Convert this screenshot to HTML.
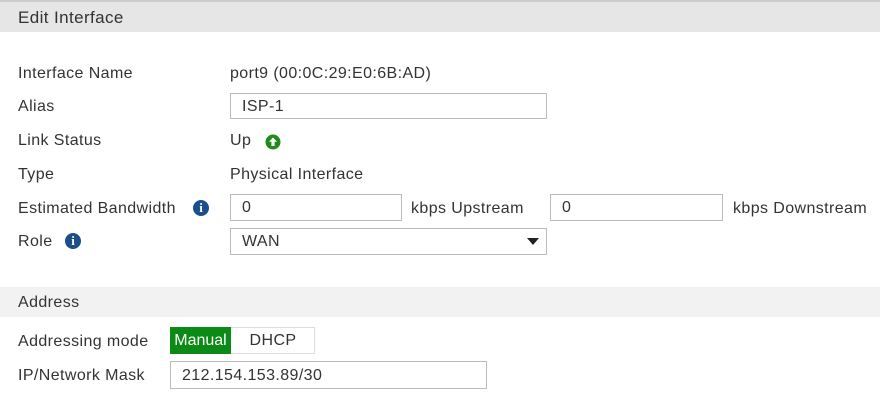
<!DOCTYPE html>
<html><head><style>
body{margin:0;width:880px;height:403px;background:#fff;font-family:"Liberation Sans",sans-serif;font-size:16px;letter-spacing:0.4px;color:#333;position:relative;overflow:hidden}
.a{position:absolute;white-space:nowrap}
.bar{position:absolute;left:0;width:880px}
.in{position:absolute;border:1px solid #bbb;background:#fff;box-sizing:border-box;padding-left:11px;line-height:25px;font-size:16px}
.i{position:absolute;width:16px;height:16px;border-radius:50%;background:#1a4f8c;color:#fff;font:bold 13px "Liberation Serif",serif;text-align:center;line-height:16px;letter-spacing:0}
</style></head><body>
<div class="bar" style="top:0;height:2px;background:#ccc"></div>
<div class="bar" style="top:2px;height:30px;background:#e6e6e6"></div>
<div class="a" style="left:18px;top:8px;font-size:17px">Edit Interface</div>
<div class="a" style="left:18px;top:65px">Interface Name</div>
<div class="a" style="left:230px;top:65px">port9 (00:0C:29:E0:6B:AD)</div>
<div class="a" style="left:18px;top:98px">Alias</div>
<div class="in" style="left:230px;top:93px;width:317px;height:26px">ISP-1</div>
<div class="a" style="left:18px;top:132px">Link Status</div>
<div class="a" style="left:230px;top:132px">Up</div>
<svg class="a" style="left:265px;top:134px" width="16" height="16" viewBox="0 0 16 16"><circle cx="8" cy="8" r="7.5" fill="#1f8a1f"/><path d="M8 3.5L12 7.8H9.6V12H6.4V7.8H4z" fill="#fff"/></svg>
<div class="a" style="left:18px;top:166px">Type</div>
<div class="a" style="left:230px;top:166px">Physical Interface</div>
<div class="a" style="left:18px;top:200px">Estimated Bandwidth</div>
<span class="i" style="left:193px;top:200px">i</span>
<div class="in" style="left:230px;top:194px;width:172px;height:27px">0</div>
<div class="a" style="left:411px;top:200px">kbps Upstream</div>
<div class="in" style="left:550px;top:194px;width:173px;height:27px">0</div>
<div class="a" style="left:733px;top:200px">kbps Downstream</div>
<div class="a" style="left:18px;top:233px">Role</div>
<span class="i" style="left:65px;top:233px">i</span>
<div class="in" style="left:230px;top:228px;width:317px;height:27px">WAN</div>
<svg class="a" style="left:527px;top:238px" width="12" height="7"><path d="M0 0H12L6 7z" fill="#222"/></svg>
<div class="bar" style="top:287px;height:30px;background:#f2f2f2"></div>
<div class="a" style="left:18px;top:294px">Address</div>
<div class="a" style="left:18px;top:333px">Addressing mode</div>
<div class="a" style="left:170px;top:327px;width:145px;height:27px;border:1px solid #ddd;box-sizing:border-box"></div>
<div class="a" style="left:170px;top:327px;width:61px;height:27px;background:#0b8a16;color:#fff;text-align:center;line-height:28px;letter-spacing:0">Manual</div>
<div class="a" style="left:231px;top:327px;width:84px;height:27px;text-align:center;line-height:28px">DHCP</div>
<div class="a" style="left:18px;top:367px">IP/Network Mask</div>
<div class="in" style="left:170px;top:361px;width:317px;height:28px;line-height:28px">212.154.153.89/30</div>
</body></html>
